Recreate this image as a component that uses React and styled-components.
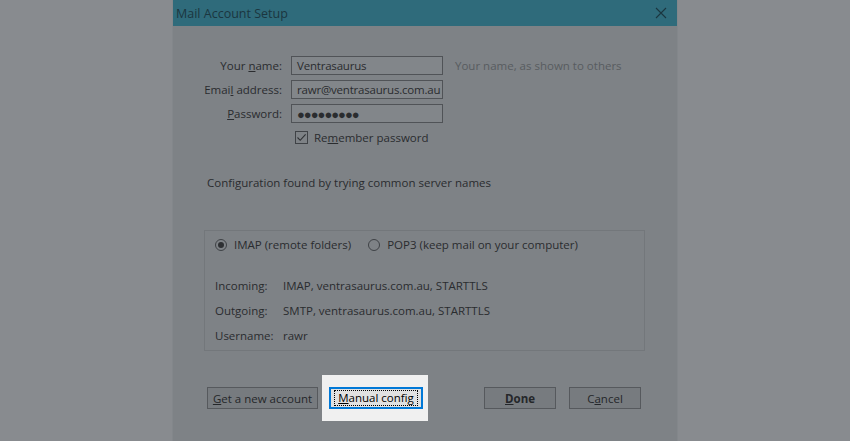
import React from "react";
import styled, { createGlobalStyle } from "styled-components";

const GlobalStyle = createGlobalStyle`
  html, body {
    margin: 0;
    padding: 0;
    background: #888b8f;
    font-family: "Open Sans", "Noto Sans", sans-serif;
    font-size: 11.5px;
    color: #2a2c2f;
  }
`;

const Page = styled.div`
  width: 850px;
  height: 441px;
  overflow: hidden;
  display: flex;
  justify-content: flex-start;
  padding-left: 173px;
  box-sizing: border-box;
`;

const Dialog = styled.div`
  width: 504px;
  height: 441px;
  background: #7e8286;
  display: flex;
  flex-direction: column;
  box-shadow: 0 0 0 1px #83878b;
`;

const TitleBar = styled.div`
  height: 26px;
  flex: none;
  background: #2f6b7b;
  display: flex;
  align-items: center;
  justify-content: space-between;
  padding: 0 10px 0 3px;
  color: #1b3640;
  font-size: 12.5px;
`;

const Body = styled.div`
  flex: 1;
  display: flex;
  flex-direction: column;
  padding: 30px 0 0 24px;
`;

const Form = styled.div`
  display: grid;
  grid-template-columns: 85px 152px auto;
  column-gap: 9px;
  row-gap: 5px;
  align-items: center;
`;

const Label = styled.span`
  text-align: right;
  white-space: nowrap;
`;

const Input = styled.div`
  height: 19px;
  box-sizing: border-box;
  border: 1px solid #505357;
  background: #82868a;
  padding: 0 2px 0 5px;
  display: flex;
  align-items: center;
  white-space: nowrap;
  overflow: hidden;
  font-size: ${(p) => (p.$dots ? "13px" : "11.5px")};
  letter-spacing: ${(p) => (p.$dots ? "-1px" : "-0.2px")};
`;

const Hint = styled.span`
  color: #585c60;
  padding-left: 3px;
  white-space: nowrap;
`;

const CheckRow = styled.label`
  grid-column: 2 / 4;
  display: flex;
  align-items: center;
  gap: 6px;
  padding-left: 4px;
  margin-top: 2px;
`;

const Box = styled.span`
  width: 13px;
  height: 13px;
  box-sizing: border-box;
  border: 1px solid #3f4246;
  display: flex;
  align-items: center;
  justify-content: center;
`;

const Status = styled.div`
  margin: 30px 0 0 10px;
`;

const Group = styled.div`
  margin: 40px 0 0 7px;
  width: 441px;
  height: 121px;
  box-sizing: border-box;
  border: 1px solid #73777b;
  padding: 6px 10px 0 10px;
  display: flex;
  flex-direction: column;
`;

const RadioRow = styled.div`
  display: flex;
  align-items: center;
  gap: 17px;
  height: 15px;
`;

const Radio = styled.label`
  display: flex;
  align-items: center;
  gap: 7px;
`;

const Circle = styled.span`
  width: 12px;
  height: 12px;
  box-sizing: border-box;
  border-radius: 50%;
  border: 1px solid #3f4246;
  display: flex;
  align-items: center;
  justify-content: center;

  &::after {
    content: "";
    width: 6px;
    height: 6px;
    border-radius: 50%;
    background: ${(p) => (p.$on ? "#2e3033" : "transparent")};
  }
`;

const Details = styled.div`
  margin-top: 25px;
  display: grid;
  grid-template-columns: 68px auto;
  row-gap: 8px;
  line-height: 17px;
`;

const Buttons = styled.div`
  margin: 24px 0 0 10px;
  width: 434px;
  display: flex;
  align-items: center;
`;

const Button = styled.div`
  width: ${(p) => p.$w}px;
  height: 22px;
  box-sizing: border-box;
  border: 1px solid #56595d;
  background: #777b7f;
  display: flex;
  align-items: center;
  justify-content: center;
  white-space: nowrap;
  font-weight: ${(p) => (p.$bold ? 700 : 400)};
  color: #25272a;
`;

const Spotlight = styled.div`
  margin-left: 4px;
  padding: 12px 5px 12px 7px;
  background: #f0f0f0;
`;

const FocusButton = styled.div`
  width: 94px;
  height: 22px;
  box-sizing: border-box;
  border: 2px solid #0078d7;
  background: #e1e1e1;
  color: #000;
  display: flex;
  align-items: center;
  justify-content: center;
  white-space: nowrap;
  padding: 1px;
`;

const FocusRing = styled.span`
  border: 1px dotted #000;
  padding: 0 3px;
  line-height: 14px;
`;

const Right = styled.div`
  margin-left: auto;
  display: flex;
  gap: 13px;
`;

const U = styled.span`
  text-decoration: underline;
`;

export default function App() {
  return (
    <>
      <GlobalStyle />
      <Page>
        <Dialog>
          <TitleBar>
            <span>Mail Account Setup</span>
            <svg width="12" height="12" viewBox="0 0 12 12">
              <path d="M1 1L11 11M11 1L1 11" stroke="#1b3640" strokeWidth="1.1" />
            </svg>
          </TitleBar>
          <Body>
            <Form>
              <Label>
                Your <U>n</U>ame:
              </Label>
              <Input>Ventrasaurus</Input>
              <Hint>Your name, as shown to others</Hint>
              <Label>
                Emai<U>l</U> address:
              </Label>
              <Input>rawr@ventrasaurus.com.au</Input>
              <span />
              <Label>
                <U>P</U>assword:
              </Label>
              <Input $dots>●●●●●●●●●</Input>
              <span />
              <span />
              <CheckRow>
                <Box>
                  <svg width="11" height="11" viewBox="0 0 11 11">
                    <path d="M1.5 5.5L4.2 8.3L9.6 2.3" fill="none" stroke="#2e3033" strokeWidth="1.1" />
                  </svg>
                </Box>
                <span>
                  Re<U>m</U>ember password
                </span>
              </CheckRow>
            </Form>
            <Status>Configuration found by trying common server names</Status>
            <Group>
              <RadioRow>
                <Radio>
                  <Circle $on />
                  IMAP (remote folders)
                </Radio>
                <Radio>
                  <Circle />
                  POP3 (keep mail on your computer)
                </Radio>
              </RadioRow>
              <Details>
                <span>Incoming:</span>
                <span>IMAP, ventrasaurus.com.au, STARTTLS</span>
                <span>Outgoing:</span>
                <span>SMTP, ventrasaurus.com.au, STARTTLS</span>
                <span>Username:</span>
                <span>rawr</span>
              </Details>
            </Group>
            <Buttons>
              <Button $w={111}>
                <span>
                  <U>G</U>et a new account
                </span>
              </Button>
              <Spotlight>
                <FocusButton>
                  <FocusRing>
                    <U>M</U>anual config
                  </FocusRing>
                </FocusButton>
              </Spotlight>
              <Right>
                <Button $w={72} $bold>
                  <span>
                    <U>D</U>one
                  </span>
                </Button>
                <Button $w={72}>
                  <span>
                    C<U>a</U>ncel
                  </span>
                </Button>
              </Right>
            </Buttons>
          </Body>
        </Dialog>
      </Page>
    </>
  );
}
